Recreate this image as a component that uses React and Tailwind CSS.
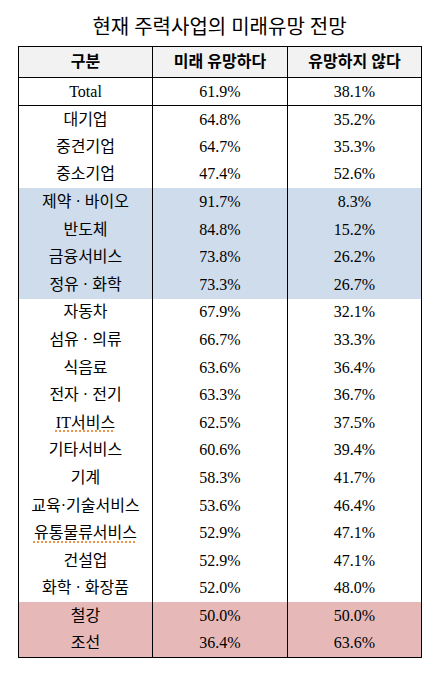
import React from 'react';

const groups = [
  {
    bg: 'bg-white',
    rows: [
      ['대기업', '64.8%', '35.2%'],
      ['중견기업', '64.7%', '35.3%'],
      ['중소기업', '47.4%', '52.6%'],
    ],
  },
  {
    bg: 'bg-[#cfdcec]',
    rows: [
      ['제약 · 바이오', '91.7%', '8.3%'],
      ['반도체', '84.8%', '15.2%'],
      ['금융서비스', '73.8%', '26.2%'],
      ['정유 · 화학', '73.3%', '26.7%'],
    ],
  },
  {
    bg: 'bg-white',
    rows: [
      ['자동차', '67.9%', '32.1%'],
      ['섬유 · 의류', '66.7%', '33.3%'],
      ['식음료', '63.6%', '36.4%'],
      ['전자 · 전기', '63.3%', '36.7%'],
      ['IT서비스', '62.5%', '37.5%', true],
      ['기타서비스', '60.6%', '39.4%'],
      ['기계', '58.3%', '41.7%'],
      ['교육·기술서비스', '53.6%', '46.4%'],
      ['유통물류서비스', '52.9%', '47.1%', true],
      ['건설업', '52.9%', '47.1%'],
      ['화학 · 화장품', '52.0%', '48.0%'],
    ],
  },
  {
    bg: 'bg-[#e6b9b8]',
    rows: [
      ['철강', '50.0%', '50.0%'],
      ['조선', '36.4%', '63.6%'],
    ],
  },
];

const font = { fontFamily: '"Liberation Serif", "Noto Sans CJK KR", serif' };

export default function App() {
  return (
    <div className="w-[433px] h-[680px] bg-white text-black" style={font}>
      <h1 className="pt-[15px] h-[46px] w-[403px] ml-[18px] text-center text-[20px] leading-[24px]">
        현재 주력사업의 미래유망 전망
      </h1>
      <table className="ml-[18px] w-[403px] border-collapse border border-black table-fixed text-[16px]">
        <colgroup>
          <col className="w-[134px]" />
          <col className="w-[135px]" />
          <col className="w-[134px]" />
        </colgroup>
        <thead>
          <tr className="bg-[#f2f2f2] h-[31px] border-b border-black">
            <th className="border-r border-black font-bold">구분</th>
            <th className="border-r border-black font-bold">미래 유망하다</th>
            <th className="font-bold">유망하지 않다</th>
          </tr>
        </thead>
        <tbody>
          <tr className="h-[28px] border-b border-black">
            <td className="border-r border-black text-center">Total</td>
            <td className="border-r border-black text-center">61.9%</td>
            <td className="text-center">38.1%</td>
          </tr>
        </tbody>
        {groups.map((g, gi) => (
          <tbody key={gi} className={g.bg}>
            {g.rows.map(([name, a, b, marked]) => (
              <tr key={name} className="h-[27.6px]">
                <td className="border-r border-black text-center whitespace-nowrap leading-[20px]">
                  {marked ? (
                    <span className="underline decoration-dotted decoration-[#e87a1e] underline-offset-[3px]">
                      {name}
                    </span>
                  ) : (
                    name
                  )}
                </td>
                <td className="border-r border-black text-center leading-[20px]">{a}</td>
                <td className="text-center leading-[20px]">{b}</td>
              </tr>
            ))}
          </tbody>
        ))}
      </table>
    </div>
  );
}
